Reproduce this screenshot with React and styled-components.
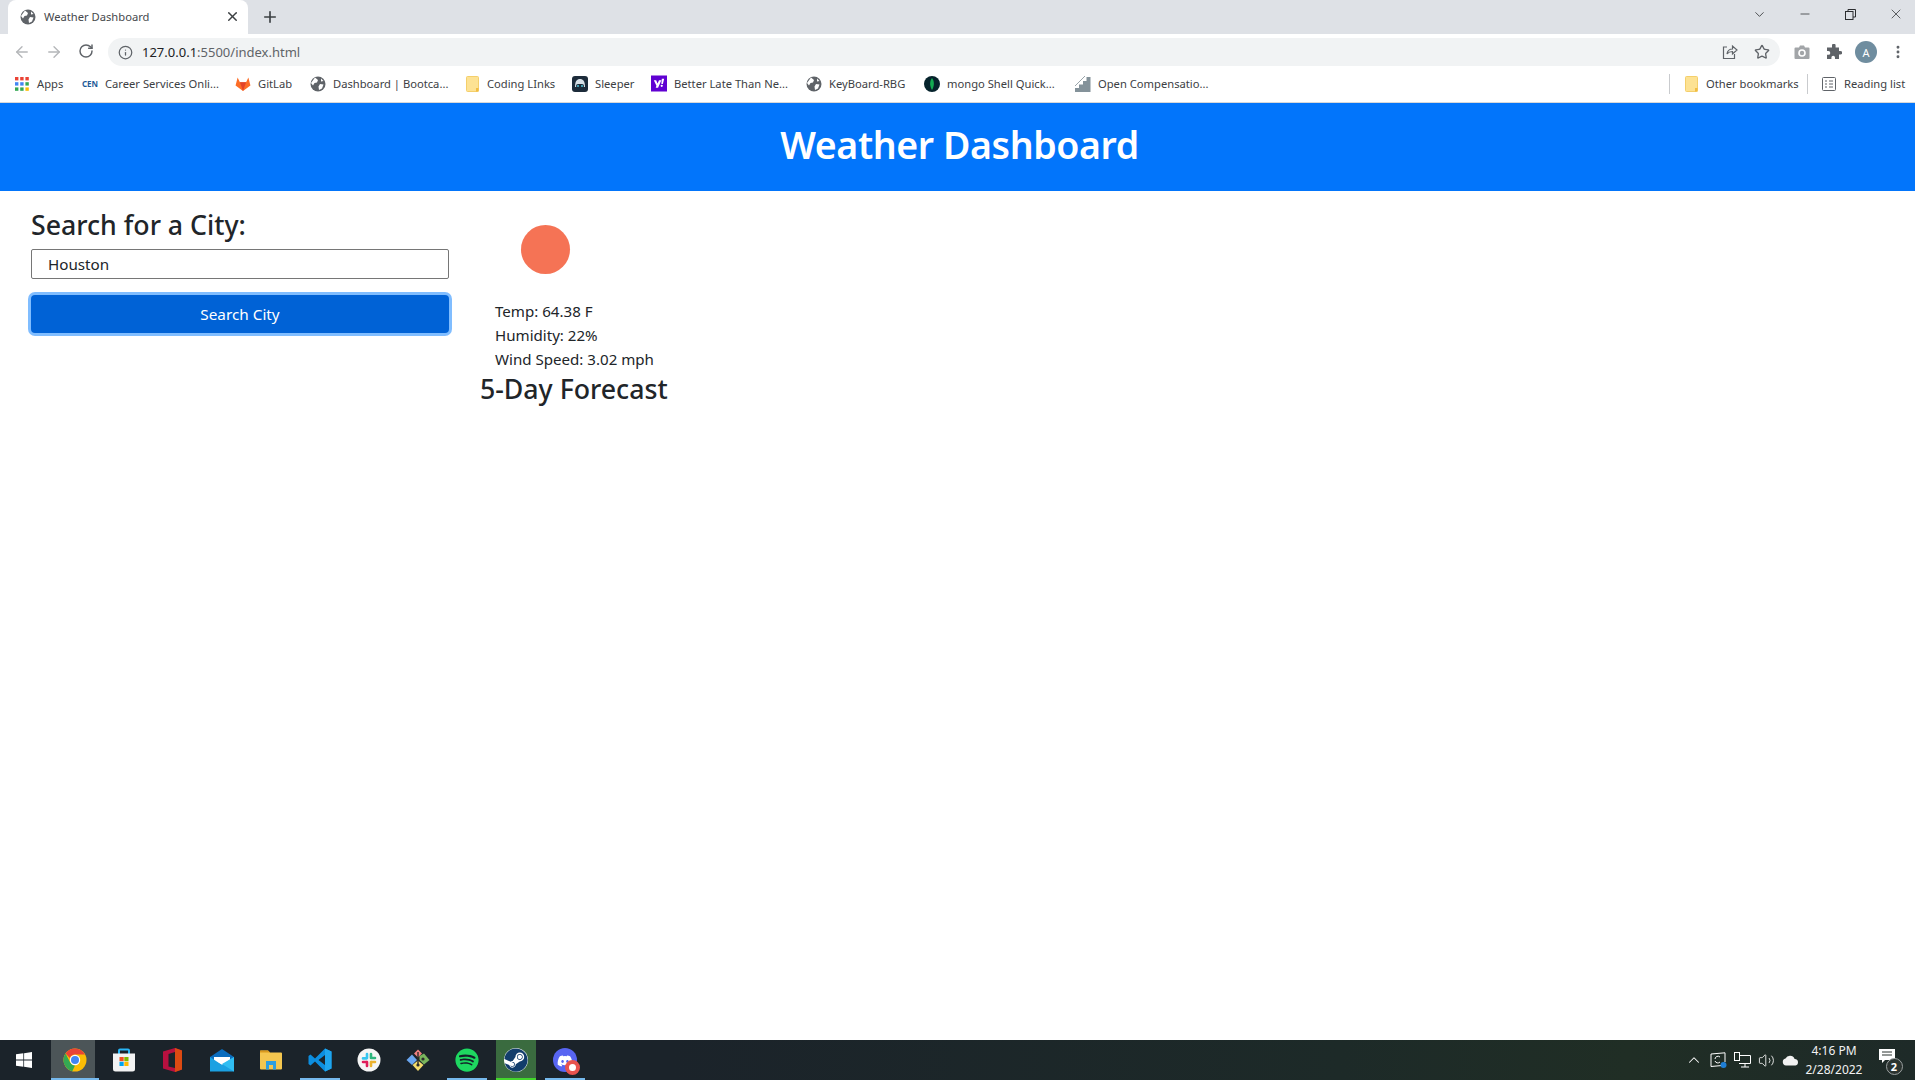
import React from 'react';
import styled, { createGlobalStyle } from 'styled-components';
import { ArrowLeft, ArrowRight, RotateCw, Info, Star, MoreVertical, X, Plus, Minus, ChevronDown, ChevronUp, Volume2 } from 'lucide-react';
import { FaSpotify, FaSteam, FaDiscord } from 'react-icons/fa';

const UI_FONT = '"Noto Sans", "Open Sans", sans-serif';

const Global = createGlobalStyle`
  html, body { margin: 0; padding: 0; background: #fff; }
  body { font-family: ${UI_FONT}; overflow: hidden; }
  * { box-sizing: border-box; }
`;

const Page = styled.div`
  width: 1915px;
  height: 1080px;
  display: flex;
  flex-direction: column;
  overflow: hidden;
  color: #212529;
`;

/* ---- browser chrome ---- */
const TabStrip = styled.div`
  height: 34px;
  background: #dee1e6;
  display: flex;
  align-items: stretch;
  padding-left: 8px;
`;
const Tab = styled.div`
  width: 240px;
  background: #fff;
  border-radius: 8px 8px 0 0;
  display: flex;
  align-items: center;
  padding: 0 8px 1px 12px;
  font-size: 11.2px;
  color: #45484c;
`;
const TabTitle = styled.span`
  margin-left: 8px;
  flex: 1;
`;
const NewTab = styled.div`
  width: 44px;
  display: flex;
  align-items: center;
  justify-content: center;
  color: #3c4043;
`;
const WindowControls = styled.div`
  margin-left: auto;
  margin-right: -4px;
  display: flex;
  align-items: center;
  height: 28px;
  color: #2b2d30;
`;
const WinButton = styled.div`
  width: 45.5px;
  display: flex;
  justify-content: center;
`;

const Toolbar = styled.div`
  height: 32px;
  padding-top: 4px;
  background: #fff;
  display: flex;
  align-items: center;
`;
const NavIcon = styled.div`
  width: 32px;
  display: flex;
  justify-content: center;
  color: ${p => (p.$off ? '#b4b6b9' : '#5f6368')};
`;
const NavGroup = styled.div`
  display: flex;
  padding-left: 6px;
  width: 108px;
`;
const Omnibox = styled.div`
  width: 1672px;
  height: 28px;
  border-radius: 14px;
  background: #f1f3f4;
  display: flex;
  align-items: center;
  padding: 0 2px 0 10px;
  font-size: 13px;
  color: #202124;
`;
const Url = styled.span`
  margin-left: 9px;
  flex: 1;
  span { color: #5f6368; }
`;
const Avatar = styled.div`
  width: 22px;
  height: 22px;
  border-radius: 50%;
  background: #6f8d9f;
  color: #fff;
  font-size: 11px;
  display: flex;
  align-items: center;
  justify-content: center;
`;
const OmniIcon = styled.div`
  width: 32px;
  display: flex;
  justify-content: center;
  color: #5f6368;
`;
const ToolIcons = styled.div`
  display: flex;
  align-items: center;
  margin-left: 6px;
  color: #5f6368;
`;

const BookmarkBar = styled.div`
  height: 37px;
  background: #fff;
  border-bottom: 1px solid #d6d8da;
  display: flex;
  align-items: center;
  padding: 0 9px 1px 14px;
  gap: 16px;
  font-size: 11.2px;
  color: #3c4043;
`;
const Bookmark = styled.div`
  display: flex;
  align-items: center;
  gap: 7px;
`;
const IconBox = styled.div`
  width: 16px;
  height: 16px;
  display: flex;
  align-items: center;
  justify-content: center;
  flex: none;
`;
const CenMark = styled.b`
  font-size: 8px;
  color: #1f5c99;
`;
const BookmarkLabel = styled.span`
  width: ${p => p.$w}px;
  white-space: nowrap;
`;
const BarSpacer = styled.div`
  flex: 1;
`;
const Separator = styled.div`
  width: 1px;
  height: 20px;
  background: #c9cbce;
  margin: 0 -3px;
`;

/* ---- the page itself ---- */
const Jumbo = styled.header`
  height: 88px;
  padding: 0 0 6px 4px;
  background: #0275fb;
  display: flex;
  align-items: center;
  justify-content: center;
`;
const Title = styled.h1`
  margin: 0;
  font-size: 37.5px;
  font-weight: 600;
  letter-spacing: -0.4px;
  line-height: 1.2;
  color: #fff;
`;
const Main = styled.main`
  flex: 1;
  display: flex;
  padding-left: 31px;
  background: #fff;
`;
const SearchColumn = styled.section`
  width: 418px;
  padding-top: 17px;
`;
const Heading = styled.h3`
  margin: 0;
  font-size: 26.7px;
  font-weight: 500;
  line-height: 33.6px;
  white-space: nowrap;
`;
const CityInput = styled.input`
  display: block;
  width: 100%;
  height: 30px;
  margin: 7px 0 16px;
  padding: 0 16px;
  border: 1px solid #767676;
  border-radius: 2px;
  font-family: ${UI_FONT};
  font-size: 15.2px;
  color: #212529;
  outline: none;
`;
const SearchButton = styled.button`
  display: block;
  width: 100%;
  height: 38px;
  border: 0;
  border-radius: 4px;
  background: #0062d6;
  box-shadow: 0 0 0 3px #80bdff;
  color: #fff;
  font-family: ${UI_FONT};
  font-size: 15.3px;
`;
const WeatherColumn = styled.section`
  margin-left: 31px;
  padding-top: 34px;
`;
const WeatherDot = styled.div`
  width: 49px;
  height: 49px;
  margin-left: 41px;
  border-radius: 50%;
  background: #f57355;
`;
const Stats = styled.div`
  margin: 25px 0 1px;
  padding-left: 15px;
`;
const Stat = styled.p`
  margin: 0;
  font-size: 15.1px;
  line-height: 24px;
`;

/* ---- taskbar ---- */
const Taskbar = styled.footer`
  height: 40px;
  background: linear-gradient(90deg, #1b232a 0%, #1b232a 35%, #1d2a28 70%, #202e25 85%, #1e2a28 100%);
  display: flex;
  align-items: center;
  color: #fff;
`;
const StartButton = styled.div`
  width: 50px;
  height: 40px;
  display: flex;
  align-items: center;
  justify-content: center;
  padding-right: 2px;
`;
const TaskItem = styled.div`
  position: relative;
  width: 49px;
  height: 40px;
  display: flex;
  align-items: center;
  justify-content: center;
  &::before {
    content: '';
    position: absolute;
    top: 0;
    bottom: 0;
    left: ${p => (p.$wide ? '1px' : '4.5px')};
    width: ${p => (p.$wide ? '44px' : '40px')};
    background: ${p => p.$bg || 'transparent'};
  }
  &::after {
    content: '';
    position: absolute;
    bottom: 0;
    height: 2px;
    left: ${p => (p.$wide ? '1px' : '4.5px')};
    width: ${p => (p.$wide ? '48px' : '40px')};
    background: ${p => p.$line || 'transparent'};
  }
  svg { position: relative; z-index: 1; }
`;
const LogoDisc = styled.span`
  position: relative;
  z-index: 1;
  display: flex;
  width: 24px;
  height: 24px;
  border-radius: 50%;
  background: ${p => p.$bg};
`;
const DiscordGlyph = styled(FaDiscord)`
  position: absolute !important;
  left: 4px;
  top: 5px;
`;
const DiscordBadge = styled.i`
  position: absolute;
  z-index: 2;
  left: 12px;
  top: 12px;
  width: 15px;
  height: 15px;
  border-radius: 50%;
  border: 4.5px solid #e8534e;
  background: #fff;
`;
const Tray = styled.div`
  margin-left: auto;
  display: flex;
  align-items: center;
  height: 100%;
`;
const TrayIcon = styled.div`
  width: 24px;
  display: flex;
  justify-content: center;
`;
const Clock = styled.div`
  width: 60px;
  margin-left: 2px;
  font-size: 12px;
  line-height: 19px;
  text-align: center;
  white-space: nowrap;
  color: #f2f2f2;
`;
const Notify = styled.div`
  position: relative;
  width: 50px;
  height: 40px;
  margin-left: 1px;
  padding: 9px 6px 0 0;
  display: flex;
  justify-content: center;
`;
const NotifyBadge = styled.span`
  position: absolute;
  right: 12.5px;
  top: 18px;
  width: 17px;
  height: 17px;
  border-radius: 50%;
  border: 1px solid #9aa0a0;
  background: #2b3330;
  font-size: 11px;
  font-weight: 700;
  line-height: 15px;
  text-align: center;
`;

/* ---- drawn icons ---- */
const Globe = ({ size = 16, color = '#5f6368' }) => (
  <svg width={size} height={size} viewBox="0 0 16 16">
    <circle cx="8" cy="8" r="7.5" fill={color} />
    <path d="M5 1.5 L8 4 L7 6.5 L4.5 7 L3 9.5 L1 7 Z M10 8 L13.5 8.5 L12 12.5 L9 14 L8.5 10.5 Z M11 2.5 L13.5 5 L11 5.5 Z" fill="#fff" />
  </svg>
);
const AppsGrid = () => {
  const cols = ['#ea4335', '#ea4335', '#ea4335', '#4285f4', '#4285f4', '#34a853', '#34a853', '#34a853', '#fbbc05'];
  return (
    <svg width="14" height="14" viewBox="0 0 14 14">
      {cols.map((c, i) => (
        <rect key={i} x={(i % 3) * 5.2} y={Math.floor(i / 3) * 5.2} width="3.4" height="3.4" fill={c} />
      ))}
    </svg>
  );
};
const Folder = () => (
  <svg width="13" height="16" viewBox="0 0 13 16">
    <rect x="0.5" y="0.5" width="12" height="15" rx="1" fill="#fde293" stroke="#f4cf6b" />
    <rect x="10" y="12" width="2.5" height="3.5" fill="#f2bd42" />
  </svg>
);
const GitLabLogo = () => (
  <svg width="17" height="16" viewBox="0 0 17 16">
    <path d="M8.5 15.5 L0.6 9.6 L2.8 1 L5.2 6.2 H11.8 L14.2 1 L16.4 9.6 Z" fill="#fc6d26" />
    <path d="M8.5 15.5 L5.2 6.2 H11.8 Z" fill="#e24329" />
  </svg>
);
const SleeperLogo = () => (
  <svg width="16" height="16" viewBox="0 0 16 16">
    <rect width="16" height="16" rx="3" fill="#1c2b3a" />
    <path d="M3 11 C3 5 5 3 8 3 C11 3 13 5 13 11 Z" fill="#d8e1e8" />
    <rect x="4" y="8" width="8" height="4" rx="2" fill="#1c2b3a" />
    <circle cx="6" cy="10" r="1" fill="#4bc4d8" />
    <circle cx="10" cy="10" r="1" fill="#4bc4d8" />
  </svg>
);
const MongoLogo = () => (
  <svg width="16" height="16" viewBox="0 0 16 16">
    <circle cx="8" cy="8" r="8" fill="#06232c" />
    <path d="M8 2 C10.5 5 10.5 10 8 14 C5.5 10 5.5 5 8 2 Z" fill="#13aa52" />
  </svg>
);
const CompLogo = () => (
  <svg width="16" height="16" viewBox="0 0 16 16">
    <path d="M0 16 V12 H4 V8.5 H8 V5 H11.5 V1 H15.5 V16 Z" fill="#84929a" />
    <path d="M0 10 L10 0" stroke="#9aa5ab" fill="none" />
  </svg>
);
const ShareIcon = () => (
  <svg width="16" height="16" viewBox="0 0 16 16" fill="none" stroke="#5f6368" strokeWidth="1.2">
    <path d="M5 3 H1.5 V14.5 H12.5 V10" />
    <path d="M5 10 C5.5 6.5 8 5 10.5 5 V2 L15 6 L10.5 10 V7.5 C8.5 7.5 6.5 8 5 10 Z" />
  </svg>
);
const CameraIcon = () => (
  <svg width="16" height="14" viewBox="0 0 16 14">
    <path d="M1.5 2.5 H5 L6 0.5 H10 L11 2.5 H14.5 A1 1 0 0 1 15.5 3.5 V13 A1 1 0 0 1 14.5 14 H1.5 A1 1 0 0 1 0.5 13 V3.5 A1 1 0 0 1 1.5 2.5 Z" fill="#a2a5a8" />
    <circle cx="8" cy="8" r="3.8" fill="#fff" />
    <circle cx="8" cy="8" r="2.2" fill="#a2a5a8" />
  </svg>
);
const PuzzleIcon = () => (
  <svg width="16" height="16" viewBox="0 0 16 16">
    <path d="M6 1.5 A1.8 1.8 0 0 1 9.6 1.5 V3.5 H13 V7 H14.4 A1.8 1.8 0 0 1 14.4 10.6 H13 V15 H9 V13.6 A1.8 1.8 0 0 0 5.4 13.6 V15 H1 V10.8 H2.4 A1.9 1.9 0 0 0 2.4 7 H1 V3.5 H6 Z" fill="#5f6368" />
  </svg>
);
const RestoreIcon = () => (
  <svg width="11" height="11" viewBox="0 0 11 11" fill="none" stroke="#2b2d30">
    <rect x="0.5" y="2.5" width="7.5" height="8" />
    <path d="M3 2.5 V0.5 H10.5 V8 H8" />
  </svg>
);
const ReadingList = () => (
  <svg width="14" height="14" viewBox="0 0 14 14" fill="none" stroke="#5f6368">
    <rect x="0.5" y="0.5" width="13" height="13" rx="1" />
    <path d="M3 4 H5 M7 4 H11 M3 7 H5 M7 7 H11 M3 10 H5 M7 10 H11" />
  </svg>
);
const WindowsLogo = () => (
  <svg width="16" height="16" viewBox="0 0 17 17" fill="#fff">
    <path d="M0 2.4 L7.8 1.3 V8 H0 Z M8.6 1.2 L17 0 V8 H8.6 Z M0 8.9 H7.8 V15.7 L0 14.6 Z M8.6 8.9 H17 V17 L8.6 15.8 Z" />
  </svg>
);
const ChromeLogo = () => (
  <svg width="24" height="24" viewBox="0 0 24 24">
    <circle cx="12" cy="12" r="11.5" fill="#fbbc05" />
    <path d="M12 .5 A11.5 11.5 0 0 1 22 6.5 H12 A5.5 5.5 0 0 0 6.8 10 L2.6 5.4 A11.5 11.5 0 0 1 12 .5 Z" fill="#ea4335" />
    <path d="M2.6 5.4 L7.3 14.7 A5.5 5.5 0 0 0 12 17.5 L9.3 23.2 A11.5 11.5 0 0 1 2.6 5.4 Z" fill="#34a853" />
    <circle cx="12" cy="12" r="5.2" fill="#fff" />
    <circle cx="12" cy="12" r="4" fill="#4285f4" />
  </svg>
);
const StoreLogo = () => (
  <svg width="24" height="24" viewBox="0 0 24 24">
    <path d="M7 7 V2.5 Q7 1.5 8 1.5 H16 Q17 1.5 17 2.5 V7" fill="none" stroke="#29b6f6" strokeWidth="2" />
    <path d="M1 5.5 H23 V21 Q23 23.5 20.5 23.5 H3.5 Q1 23.5 1 21 Z" fill="#f3f3f3" />
    <rect x="7.5" y="9" width="4.2" height="4.2" fill="#f25022" />
    <rect x="12.3" y="9" width="4.2" height="4.2" fill="#7fba00" />
    <rect x="7.5" y="13.8" width="4.2" height="4.2" fill="#00a4ef" />
    <rect x="12.3" y="13.8" width="4.2" height="4.2" fill="#ffb900" />
  </svg>
);
const OfficeLogo = () => (
  <svg width="19" height="24" viewBox="0 0 19 24">
    <path d="M12 0 L19 2.5 V21.5 L12 24 L0 20.5 V3.5 Z" fill="#b7103f" />
    <path d="M5.5 6 L12 4 V20 L5.5 18.5 Z" fill="#1b232a" />
    <path d="M12 0 L19 2.5 V21.5 L12 24 Z" fill="#dc4a12" />
  </svg>
);
const MailLogo = () => (
  <svg width="24" height="24" viewBox="0 0 24 24">
    <path d="M0 9 L12 1 L24 9 V11 L12 17 L0 11 Z" fill="#0a6cbd" />
    <path d="M4 9 H20 V13 L12 17 L4 13 Z" fill="#fff" />
    <path d="M0 9 L12 17 L24 9 V23.5 H0 Z" fill="#1ba1e2" />
    <path d="M24 9 V23.5 L12 16 Z" fill="#30bdf2" />
  </svg>
);
const ExplorerLogo = () => (
  <svg width="22" height="20" viewBox="0 0 22 20">
    <path d="M0 1.5 Q0 .5 1 .5 H8 L10 2.5 H21 Q22 2.5 22 3.5 V18.5 Q22 19.5 21 19.5 H1 Q0 19.5 0 18.5 Z" fill="#f4c64f" />
    <path d="M0 .5 H8 L10 2.5 H0 Z" fill="#d99a1f" />
    <path d="M6 11 H16 V19.5 H13 V15 H9 V19.5 H6 Z" fill="#2d9fe0" />
  </svg>
);
const VsCodeLogo = () => (
  <svg width="24" height="24" viewBox="0 0 24 24">
    <path d="M17 .5 L23.5 3.5 V20.5 L17 23.5 L7 13.5 L2.5 17.5 L.5 16 V8 L2.5 6.5 L7 10.5 Z M17 7 L10.5 12 L17 17 Z" fill="#0c8ee0" />
    <path d="M17 .5 L23.5 3.5 V20.5 L17 23.5 V17 V7 Z" fill="#1fa5ee" />
  </svg>
);
const SlackLogo = () => (
  <svg width="24" height="24" viewBox="0 0 24 24" strokeWidth="2.6" strokeLinecap="round">
    <circle cx="12" cy="12" r="11.5" fill="#f5f5f5" />
    <path d="M10 6 V10 M6 10.4 H9.5" stroke="#36c5f0" fill="none" />
    <path d="M14 6 V10 M18 10 H15" stroke="#2eb67d" fill="none" />
    <path d="M14 18 V14 M18 14 H14.5" stroke="#ecb22e" fill="none" />
    <path d="M10 18 V14 M6 14 H9.5" stroke="#e01e5a" fill="none" />
  </svg>
);
const GitKrakenLogo = () => (
  <svg width="24" height="24" viewBox="0 0 24 24">
    <path d="M8 5.5 L12 1.5 L16 5.5 L12 9.5 Z" fill="#f08080" />
    <path d="M13.5 8 L18 5.5 L23.5 12 L18 16.5 L13.5 12 Z" fill="#7ab55c" />
    <path d="M.5 12 L6 6.5 L11 12 L6 17 Z" fill="#6aa6f0" />
    <path d="M6.5 17 L12 12.5 L17.5 17 L12 23 Z" fill="#f4dc6c" />
    <path d="M12 4 V16" stroke="#2c2c2c" strokeWidth="1.4" />
    <circle cx="12" cy="17" r="1.6" fill="#2c2c2c" />
    <circle cx="17" cy="11" r="1.6" fill="#2c2c2c" />
  </svg>
);
const SteamLogo = () => (
  <LogoDisc $bg="#fff"><FaSteam size={24} color="#123d6b" /></LogoDisc>
);
const SpotifyLogo = () => (
  <LogoDisc $bg="#14202a"><FaSpotify size={24} color="#1ed760" /></LogoDisc>
);
const DiscordLogo = () => (
  <LogoDisc $bg="#5865f2">
    <DiscordGlyph size={16} color="#fff" />
    <DiscordBadge />
  </LogoDisc>
);
const YahooLogo = () => (
  <svg width="17" height="17" viewBox="0 0 17 17">
    <rect width="17" height="17" fill="#6001d2" />
    <path d="M3 5 H5.5 L7 8.5 L8.5 5 H11 L7.5 13 H5 L5.8 11 Z M11.5 3.5 H14 L12.6 9 H11 Z" fill="#fff" />
    <circle cx="11.4" cy="11" r="1.2" fill="#fff" />
  </svg>
);

const bookmarks = [
  { label: 'Apps', w: 29, icon: <AppsGrid /> },
  { label: 'Career Services Onli...', w: 114, icon: <CenMark>CEN</CenMark> },
  { label: 'GitLab', w: 36, icon: <GitLabLogo /> },
  { label: 'Dashboard | Bootca...', w: 115, icon: <Globe /> },
  { label: 'Coding LInks', w: 69, icon: <Folder /> },
  { label: 'Sleeper', w: 40, icon: <SleeperLogo /> },
  { label: 'Better Late Than Ne...', w: 116, icon: <YahooLogo /> },
  { label: 'KeyBoard-RBG', w: 79, icon: <Globe /> },
  { label: 'mongo Shell Quick...', w: 112, icon: <MongoLogo /> },
  { label: 'Open Compensatio...', w: 112, icon: <CompLogo /> },
];

const taskItems = [
  { key: 'chrome', icon: <ChromeLogo />, wide: true, bg: '#4c5558', line: '#76b9ed' },
  { key: 'store', icon: <StoreLogo /> },
  { key: 'office', icon: <OfficeLogo /> },
  { key: 'mail', icon: <MailLogo /> },
  { key: 'explorer', icon: <ExplorerLogo /> },
  { key: 'vscode', icon: <VsCodeLogo />, line: '#76b9ed' },
  { key: 'slack', icon: <SlackLogo /> },
  { key: 'kraken', icon: <GitKrakenLogo /> },
  { key: 'spotify', icon: <SpotifyLogo />, line: '#76b9ed' },
  { key: 'steam', icon: <SteamLogo />, bg: '#3a6b3f', line: '#43d62c' },
  { key: 'discord', icon: <DiscordLogo />, line: '#76b9ed' },
];

export default function App() {
  return (
    <Page>
      <Global />
      <TabStrip>
        <Tab>
          <Globe />
          <TabTitle>Weather Dashboard</TabTitle>
          <X size={15} strokeWidth={2.4} color="#3c4043" />
        </Tab>
        <NewTab><Plus size={18} strokeWidth={2.2} /></NewTab>
        <WindowControls>
          <WinButton><ChevronDown size={15} strokeWidth={1.3} /></WinButton>
          <WinButton><Minus size={14} strokeWidth={1.3} /></WinButton>
          <WinButton><RestoreIcon /></WinButton>
          <WinButton><X size={16} strokeWidth={1.1} /></WinButton>
        </WindowControls>
      </TabStrip>

      <Toolbar>
        <NavGroup>
          <NavIcon $off><ArrowLeft size={18} strokeWidth={1.8} /></NavIcon>
          <NavIcon $off><ArrowRight size={18} strokeWidth={1.8} /></NavIcon>
          <NavIcon><RotateCw size={16} strokeWidth={2.2} /></NavIcon>
        </NavGroup>
        <Omnibox>
          <Info size={15} color="#5f6368" />
          <Url>127.0.0.1<span>:5500/index.html</span></Url>
          <OmniIcon><ShareIcon /></OmniIcon>
          <OmniIcon><Star size={16} strokeWidth={2} /></OmniIcon>
        </Omnibox>
        <ToolIcons>
          <OmniIcon><CameraIcon /></OmniIcon>
          <OmniIcon><PuzzleIcon /></OmniIcon>
          <OmniIcon><Avatar>A</Avatar></OmniIcon>
          <OmniIcon><MoreVertical size={16} strokeWidth={2.4} color="#5f6368" /></OmniIcon>
        </ToolIcons>
      </Toolbar>

      <BookmarkBar>
        {bookmarks.map(b => (
          <Bookmark key={b.label}>
            <IconBox>{b.icon}</IconBox>
            <BookmarkLabel $w={b.w}>{b.label}</BookmarkLabel>
          </Bookmark>
        ))}
        <BarSpacer />
        <Separator />
        <Bookmark>
          <IconBox><Folder /></IconBox>
          <BookmarkLabel $w={88}>Other bookmarks</BookmarkLabel>
        </Bookmark>
        <Separator />
        <Bookmark>
          <IconBox><ReadingList /></IconBox>
          <BookmarkLabel $w={62}>Reading list</BookmarkLabel>
        </Bookmark>
      </BookmarkBar>

      <Jumbo>
        <Title>Weather Dashboard</Title>
      </Jumbo>

      <Main>
        <SearchColumn>
          <Heading>Search for a City:</Heading>
          <CityInput defaultValue="Houston" />
          <SearchButton>Search City</SearchButton>
        </SearchColumn>
        <WeatherColumn>
          <WeatherDot />
          <Stats>
            <Stat>Temp: 64.38 F</Stat>
            <Stat>Humidity: 22%</Stat>
            <Stat>Wind Speed: 3.02 mph</Stat>
          </Stats>
          <Heading>5-Day Forecast</Heading>
        </WeatherColumn>
      </Main>

      <Taskbar>
        <StartButton><WindowsLogo /></StartButton>
        {taskItems.map(t => (
          <TaskItem key={t.key} $wide={t.wide} $bg={t.bg} $line={t.line}>{t.icon}</TaskItem>
        ))}
        <Tray>
          <TrayIcon><ChevronUp size={18} strokeWidth={1.4} /></TrayIcon>
          <TrayIcon>
            <svg width="17" height="16" viewBox="0 0 17 16" fill="none" stroke="#fff">
              <path d="M1 2 L15 .8 V10 M12 13.5 L1 14.5 V2" />
              <path d="M10 5 A3 3 0 0 0 5 7 M5 9 A3 3 0 0 0 10 10" />
              <circle cx="13.5" cy="13" r="3" fill="#1f7fd6" stroke="none" />
            </svg>
          </TrayIcon>
          <TrayIcon>
            <svg width="17" height="16" viewBox="0 0 17 16" fill="none" stroke="#fff">
              <path d="M5 3.5 H16.5 V11.5 H5 M11 11.5 V15 M7 15 H15" />
              <rect x="0.5" y="0.5" width="5" height="8" />
            </svg>
          </TrayIcon>
          <TrayIcon><Volume2 size={17} strokeWidth={1.2} /></TrayIcon>
          <TrayIcon>
            <svg width="17" height="12" viewBox="0 0 17 12">
              <path d="M4 11.5 A3.5 3.5 0 0 1 3.5 4.6 A5 5 0 0 1 12.6 5 A3.3 3.3 0 0 1 13.5 11.5 Z" fill="#f2f2f2" />
            </svg>
          </TrayIcon>
          <Clock>4:16 PM<br />2/28/2022</Clock>
          <Notify>
            <svg width="16" height="15" viewBox="0 0 16 15">
              <path d="M0 0 H16 V11 H6 L3 14 V11 H0 Z" fill="#fff" />
              <path d="M3 3 H13 M3 6 H13" stroke="#2b3330" />
            </svg>
            <NotifyBadge>2</NotifyBadge>
          </Notify>
        </Tray>
      </Taskbar>
    </Page>
  );
}
